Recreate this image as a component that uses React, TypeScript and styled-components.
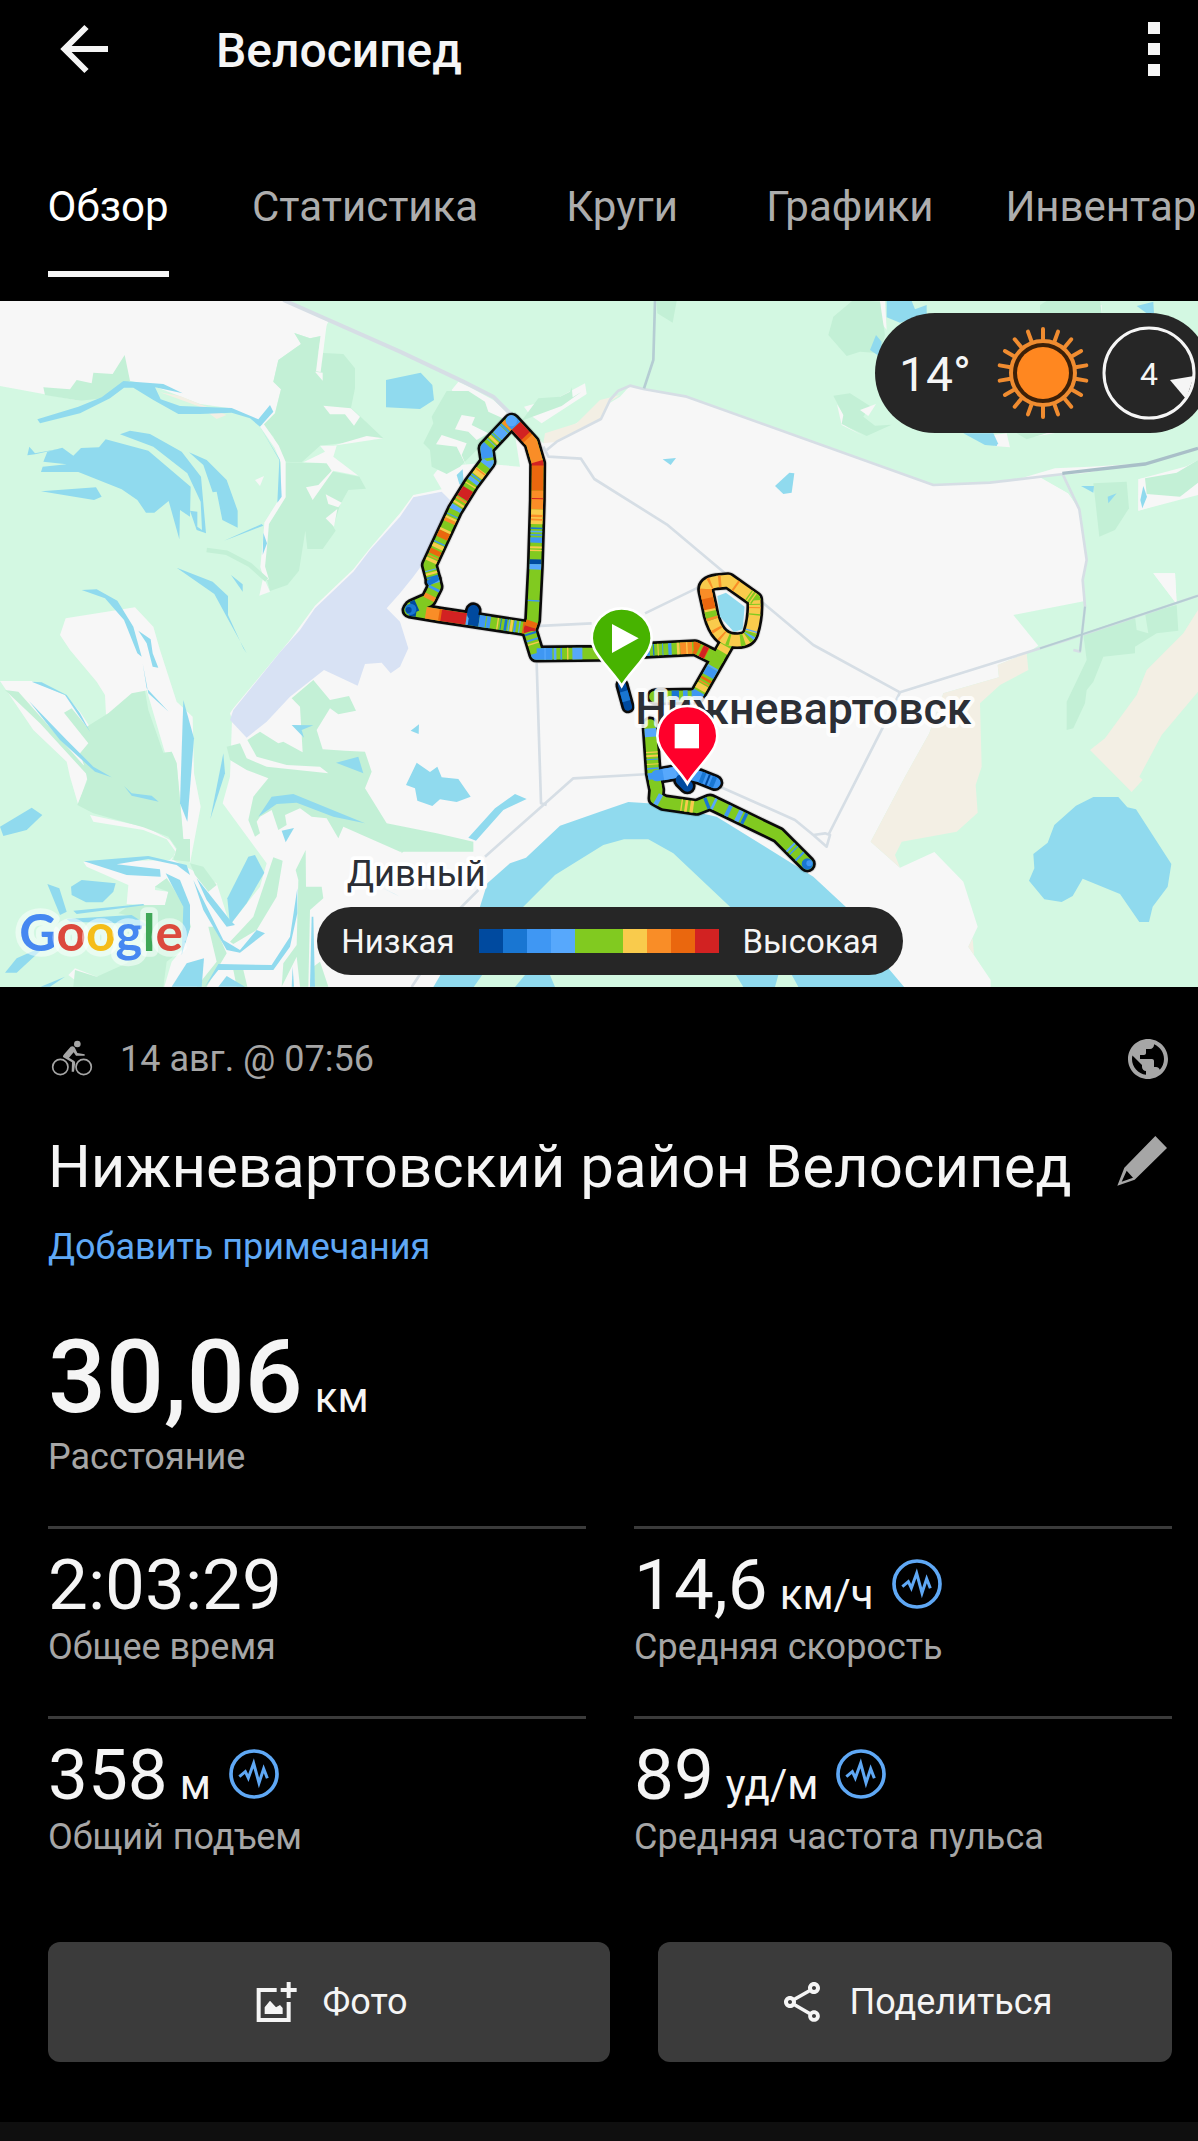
import React from "react";
import styled, { createGlobalStyle } from "styled-components";
import { MdOutlineShare, MdPublic } from "react-icons/md";

const color = {
  text: "#f5f5f5",
  muted: "#a6a6a6",
  link: "#5fa8f5",
  line: "#3b3b3b",
  pill: "#262626",
};

const GlobalStyle = createGlobalStyle`
  * { box-sizing: border-box; }
  body {
    margin: 0;
    background: #000;
    color: ${color.text};
    font-family: Roboto, "Noto Sans", sans-serif;
  }
  button {
    padding: 0;
    border: 0;
    background: none;
    color: inherit;
    font: inherit;
    cursor: pointer;
  }
  svg { display: block; flex: none; }
`;

const Page = styled.div`
  overflow: hidden;
`;

const Header = styled.header`
  display: flex;
  align-items: center;
  height: 98px;
  padding: 0 36px 0 60px;
`;

const Title = styled.h1`
  flex: 1;
  margin: 0 0 0 106px;
  padding-top: 4px;
  font-size: 48px;
  line-height: 56px;
  font-weight: 500;
`;

const Tabs = styled.nav`
  display: flex;
  padding: 85px 0 24px;
`;

const Tab = styled.button`
  && {
    flex: none;
    min-width: 216px;
    padding: 0 36px;
    font-size: 42px;
    line-height: 48px;
  }
`;

const TabLabel = styled.span<{ $active?: boolean }>`
  display: inline-block;
  padding-bottom: 40px;
  border-bottom: 6px solid ${(p) => (p.$active ? color.text : "transparent")};
  color: ${(p) => (p.$active ? "#fff" : "#adadad")};
  vertical-align: top;
`;

const MapArea = styled.section`
  position: relative;
  overflow: hidden;
`;

const MapSvg = styled.svg`
  width: 100%;
  height: auto;
`;

const Weather = styled.div`
  position: absolute;
  top: 12px;
  right: -12px;
  display: flex;
  align-items: center;
  height: 120px;
  padding: 0 14px 0 24px;
  border-radius: 60px;
  background: ${color.pill};
`;

const Temperature = styled.span`
  margin-right: 25px;
  padding-top: 4px;
  font-size: 48px;
  line-height: 56px;
`;

const Wind = styled.div`
  position: relative;
  display: grid;
  place-items: center;
  width: 94px;
  height: 94px;
  margin-left: 12px;
  padding-top: 2px;
  font-size: 32px;
  line-height: 40px;
`;

const WindDial = styled.svg`
  position: absolute;
  inset: 0;
`;

const LegendRow = styled.div`
  position: absolute;
  left: 48px;
  right: 26px;
  bottom: 12px;
  display: flex;
  justify-content: center;
`;

const Legend = styled.div`
  display: flex;
  align-items: center;
  gap: 24px;
  height: 68px;
  padding: 0 24px;
  border-radius: 34px;
  background: ${color.pill};
  font-size: 33px;
  line-height: 40px;
`;

const LegendText = styled.span`
  padding-top: 2px;
`;

const Scale = styled.div`
  display: flex;
`;

const Swatch = styled.span<{ $color: string; $wide?: boolean }>`
  width: ${(p) => (p.$wide ? 48 : 24)}px;
  height: 24px;
  background: ${(p) => p.$color};
`;

const Details = styled.main`
  padding: 48px 26px 60px 48px;
`;

const Meta = styled.div`
  display: flex;
  align-items: center;
  gap: 24px;
  color: ${color.muted};
  font-size: 36px;
  line-height: 48px;
`;

const DateText = styled.time`
  flex: 1;
`;

const NameRow = styled.div`
  display: flex;
  align-items: flex-start;
  justify-content: space-between;
  margin-top: 48px;
  color: ${color.muted};
`;

const Name = styled.h2`
  margin: 0;
  color: ${color.text};
  font-size: 60px;
  line-height: 72px;
  font-weight: 400;
`;

const NotesLink = styled.a`
  display: block;
  width: fit-content;
  margin-top: 24px;
  color: ${color.link};
  font-size: 36px;
  line-height: 40px;
  text-decoration: none;
`;

const Distance = styled.div`
  margin: 54px 0 49px;
`;

const Value = styled.div<{ $big?: boolean }>`
  display: flex;
  align-items: baseline;
  font-size: ${(p) => (p.$big ? 102 : 71)}px;
  line-height: ${(p) => (p.$big ? 112 : 84)}px;
  font-weight: ${(p) => (p.$big ? 500 : 400)};
  margin-bottom: ${(p) => (p.$big ? 4 : 0)}px;
`;

const Unit = styled.span`
  margin-left: 12px;
  font-size: 42px;
  line-height: 48px;
  font-weight: 400;
`;

const Label = styled.div`
  color: ${color.muted};
  font-size: 36px;
  line-height: 40px;
`;

const Stats = styled.section`
  display: grid;
  grid-template-columns: 1fr 1fr;
  column-gap: 48px;
`;

const Stat = styled.div`
  padding: 14px 0 49px;
  border-top: 3px solid ${color.line};
`;

const ChartButton = styled.button`
  && {
    margin-left: 18px;
    color: ${color.link};
    line-height: 0;
  }
  svg { display: inline; }
`;

const Actions = styled.div`
  display: grid;
  grid-template-columns: 562fr 514fr;
  gap: 48px;
  margin-top: 36px;
`;

const Action = styled.button`
  && {
    display: flex;
    align-items: center;
    justify-content: center;
    gap: 24px;
    height: 120px;
    border-radius: 12px;
    background: ${color.line};
    font-size: 36px;
    line-height: 44px;
  }
`;

const BottomBar = styled.footer`
  height: 19px;
  background: #0f0f0f;
`;

/* ---------- icons ---------- */

const BackIcon = () => (
  <svg width="50" height="50" viewBox="0 0 50 50" fill="none" stroke="currentColor" strokeWidth="6">
    <path d="M48 25H6M26.500 3L4.500 25l22 22" />
  </svg>
);

const MoreIcon = () => (
  <svg width="16" height="54" viewBox="0 0 16 54" fill="currentColor">
    <path d="M2 0h12v12H2zM2 21h12v12H2zM2 42h12v12H2z" />
  </svg>
);

const BikeIcon = () => (
  <svg width="48" height="48" viewBox="0 0 144 144" fill="currentColor">
    <g fill="none" stroke="currentColor" strokeWidth="5">
      <circle cx="37" cy="96" r="23" />
      <circle cx="107" cy="96" r="23" />
    </g>
    <circle cx="88" cy="27" r="10" />
    <path d="M68 35c6-4 12 0 14 6l6 13 22 4v4H84l-7-10-14 16 16 10c4 3 2 10 1 18l-2 14h-7l1-28-26-15c-3-3 0-6 3-10z" />
  </svg>
);

const PencilIcon = () => (
  <svg width="60" height="60" viewBox="0 0 180 180" fill="currentColor">
    <path d="M130 15l35 36-97 95-52 18 21-54zM44 119l-15 33 34-12z" fillRule="evenodd" />
  </svg>
);

const PulseIcon = () => (
  <svg width="50" height="50" viewBox="0 0 150 150" fill="none" stroke="currentColor">
    <circle cx="75" cy="75" r="69" strokeWidth="11" />
    <path d="M31 83l18-15 9 19 16-44 16 59 14-43 11 29" strokeWidth="9" />
  </svg>
);

const PhotoIcon = () => (
  <svg width="48" height="48" viewBox="-8 0 144 144" fill="currentColor">
    <path d="M12 30h60v12H24v78h78V72h12v60H12zM102 12h12v18h18v12h-18v18h-12V42H84V30h18zM36 108V88l16-20 18 20 12-7 8 9v18z" />
  </svg>
);

const SunIcon = () => (
  <svg width="94" height="94" viewBox="0 0 94 94">
    <g stroke="#f08c30" strokeWidth="4" strokeLinecap="round">
      {Array.from({ length: 18 }, (_, i) => (
        <path key={i} d="M47 14V3" transform={`rotate(${i * 20} 47 47)`} />
      ))}
    </g>
    <circle cx="47" cy="47" r="32" fill="#3d2008" stroke="#f08c30" strokeWidth="4" />
    <circle cx="47" cy="47" r="26" fill="#ff8720" />
  </svg>
);

/* ---------- map ---------- */

const heat = {
  navy: "#004a9f",
  blue: "#1976d2",
  azure: "#3f97f3",
  sky: "#57a8fc",
  green: "#81ca20",
  yellow: "#f9cb4c",
  orange: "#f98d27",
  ember: "#ea670e",
  red: "#d22222",
};

type Heat = keyof typeof heat;
type Band = [start: number, length: number, tone: Heat];

const legend: Heat[] = ["navy", "blue", "azure", "sky", "green", "yellow", "orange", "ember", "red"];

interface Leg {
  d: string;
  width?: number;
  base?: Heat;
  bands: Band[];
}

const legs: Leg[] = [
  {
    d: "M1230 930L1320 945 1420 960 1585 985",
    bands: [
      [0, 20, "navy"], [48, 47, "orange"], [88, 10, "ember"], [95, 76, "red"], [171, 8, "sky"], [178, 32, "navy"],
      [210, 34, "azure"], [229, 3, "green"], [264, 4, "yellow"], [274, 3, "blue"], [286, 8, "blue"], [298, 4, "sky"],
      [304, 8, "yellow"], [315, 7, "azure"], [330, 4, "sky"], [342, 17, "ember"],
    ],
  },
  {
    d: "M1236 922L1285 900 1305 860 1288 795 1365 630 1415 550 1464 485 1458 445 1532 366",
    bands: [
      [0, 16, "navy"], [56, 14, "orange"], [88, 8, "azure"], [108, 12, "sky"], [126, 5, "blue"], [136, 7, "yellow"],
      [148, 3, "sky"], [176, 10, "yellow"], [190, 4, "orange"], [200, 15, "ember"], [221, 12, "yellow"],
      [236, 4, "azure"], [254, 22, "ember"], [276, 7, "yellow"], [306, 10, "orange"], [316, 7, "yellow"],
      [328, 3, "azure"], [347, 14, "sky"], [366, 7, "yellow"], [380, 6, "orange"], [390, 32, "red"], [434, 4, "yellow"],
      [446, 12, "sky"], [462, 5, "azure"], [470, 20, "yellow"], [484, 4, "orange"], [510, 16, "sky"],
      [534, 40, "azure"], [586, 3, "sky"], [594, 8, "yellow"], [606, 5, "azure"], [614, 28, "sky"],
      [644, 6, "azure"], [652, 12, "orange"],
    ],
  },
  {
    d: "M1536 364L1595 428 1613 490 1612 600 1606 800 1598 960 1588 990 1610 1062 1800 1060 1950 1050 2085 1043 2140 1070",
    bands: [
      [0, 18, "azure"], [18, 48, "red"], [60, 18, "ember"], [70, 80, "orange"], [146, 18, "red"],
      [158, 76, "ember"], [234, 56, "orange"], [256, 3, "red"], [290, 44, "yellow"], [306, 7, "orange"],
      [318, 5, "orange"], [344, 5, "blue"], [354, 5, "sky"], [364, 5, "azure"], [374, 16, "azure"], [401, 6, "yellow"],
      [411, 4, "yellow"], [440, 14, "navy"], [454, 16, "sky"], [562, 4, "azure"], [626, 18, "ember"],
      [644, 14, "red"], [662, 6, "blue"], [682, 5, "azure"], [694, 4, "yellow"], [726, 50, "azure"],
      [752, 4, "sky"], [780, 8, "sky"], [800, 5, "azure"], [820, 4, "yellow"], [836, 30, "sky"],
      [1046, 5, "sky"], [1058, 10, "azure"], [1078, 4, "blue"], [1092, 3, "yellow"], [1106, 3, "azure"],
      [1124, 10, "azure"], [1150, 8, "yellow"], [1160, 36, "orange"], [1178, 4, "yellow"],
      [1200, 44, "ember"], [1216, 8, "green"], [1226, 16, "red"],
    ],
  },
  {
    d: "M1950 1275L1960 1420 1970 1470 1968 1495 1992 1508 2090 1522 2130 1506 2335 1605 2422 1692",
    bands: [
      [10, 26, "sky"], [80, 4, "yellow"], [90, 6, "yellow"], [102, 3, "azure"], [116, 3, "yellow"], [128, 5, "azure"],
      [144, 18, "azure"], [166, 22, "green"], [222, 14, "sky"], [300, 4, "yellow"], [312, 8, "yellow"],
      [328, 10, "yellow"], [376, 10, "blue"], [400, 8, "sky"], [446, 12, "azure"], [480, 14, "sky"],
      [500, 10, "blue"], [668, 6, "sky"], [682, 4, "azure"], [706, 6, "azure"],
    ],
  },
  {
    d: "M1965 1190L2090 1188 2185 1022",
    bands: [
      [6, 12, "sky"], [28, 6, "azure"], [50, 22, "blue"], [84, 14, "azure"], [110, 30, "azure"],
      [146, 18, "yellow"], [168, 4, "orange"], [178, 8, "ember"], [194, 26, "azure"], [220, 6, "sky"],
      [250, 10, "green"], [278, 20, "yellow"],
    ],
  },
  {
    d: "M2190 1020C2150 1010 2135 960 2128 920L2118 875Q2112 850 2150 845L2185 842 2264 898Q2268 950 2252 1000 2242 1028 2190 1020",
    base: "yellow",
    bands: [
      [0, 8, "green"], [24, 6, "orange"], [48, 8, "orange"], [84, 26, "green"], [84, 8, "orange"], [116, 60, "ember"],
      [150, 28, "orange"], [198, 6, "orange"], [226, 8, "orange"], [280, 6, "orange"], [330, 26, "green"],
      [334, 4, "yellow"], [344, 4, "yellow"], [366, 3, "green"], [376, 3, "orange"], [396, 4, "green"],
      [446, 4, "sky"], [452, 22, "green"], [460, 6, "sky"], [484, 12, "green"],
    ],
  },
  {
    d: "M1970 1427L2040 1415 2100 1430 2145 1448",
    width: 34,
    base: "azure",
    bands: [[20, 40, "sky"], [135, 12, "blue"], [155, 6, "navy"], [168, 20, "blue"]],
  },
  { d: "M2044 1440L2062 1458", width: 34, base: "navy", bands: [] },
  { d: "M1866 1155L1884 1220", width: 24, base: "navy", bands: [[20, 30, "blue"]] },
  { d: "M1418 942L1420 932", width: 34, base: "navy", bands: [] },
  { d: "M1290 846L1308 836", width: 18, base: "blue", bands: [] },
];

/* turning points, where the rider slowed down */
const turns: [x: number, y: number, r: number, tone: Heat][] = [
  [1232, 928, 17, "blue"],
  [1226, 930, 9, "navy"],
  [1534, 362, 17, "sky"],
  [2422, 1692, 17, "blue"],
  [2428, 1690, 9, "azure"],
];

const Track = () => (
  <g fill="none" strokeLinejoin="round" strokeLinecap="round">
    {legs.map((leg) => (
      <path key={leg.d} d={leg.d} stroke="#000" strokeOpacity=".1" strokeWidth={(leg.width ?? 35) + 22} />
    ))}
    {legs.map((leg) => (
      <path key={leg.d} d={leg.d} stroke="#0a0a0a" strokeWidth={(leg.width ?? 35) + 16} />
    ))}
    {legs.map((leg) => (
      <g key={leg.d} strokeWidth={leg.width ?? 35}>
        <path d={leg.d} stroke={heat[leg.base ?? "green"]} />
        {leg.bands.map(([start, length, tone], i) => (
          <path key={i} d={leg.d} stroke={heat[tone]} strokeLinecap="butt" strokeDasharray={`0 ${start} ${length} 9999`} />
        ))}
      </g>
    ))}
    {turns.map(([x, y, r, tone]) => (
      <circle key={`${x}-${y}`} cx={x} cy={y} r={r} fill={heat[tone]} />
    ))}
  </g>
);

const whites = [
  "0,0 850,0 985,65 963,108 930,115 883,99 903,132 835,180 820,245 843,268 825,340 790,375 770,362 690,325 600,312 470,262 390,242 240,302 0,258",
  "1535,345 1630,430 1860,290 1890,257 1930,268 2060,290 2400,412 2800,555 2970,548 3120,530 3205,580 3240,630 3260,780 3248,840 3255,903 3040,945 3115,1037 3080,1060 2993,1095 2997,1132 2830,1180 2788,1300 2715,1430 2612,1625 2700,1703 2803,1656 2890,1745 2933,1880 2905,1940 2972,2040 2972,2070 490,2070 515,1985 545,1950 572,1880 560,1810 500,1735 465,1760 465,1770 505,1775 495,1815 440,1815 380,1812 385,1755 260,1700 250,1685 520,1680 650,1750 690,1875 780,1760 800,1690 668,1510 690,1430 696,1260 690,1240 700,1225 870,1020 945,917 1060,808 1110,745 1200,640 1240,585 1325,568 1300,525 1320,500 1440,490 1560,500",
  "180,1005 197,955 405,922 460,980 480,1050 530,1205 578,1250 582,1420 602,1520 570,1690 550,1620 540,1500 530,1390 515,1355 495,1358 440,1170 318,1245 315,1185 290,1145 210,1050",
  "0,1143 95,1143 195,1185 240,1235 325,1365 260,1440 235,1515 210,1430 200,1385 100,1290",
  "270,1545 440,1582 510,1620 530,1650 510,1690 485,1705 530,1660 500,1618 430,1590 280,1565",
  "1355,270 1375,245 1410,262 1480,300 1530,345 1500,380 1440,420 1420,360",
  "1355,370 1305,450 1360,560 1330,500 1350,460",
  "1572,320 1680,290 1755,250 1760,282 1625,370 1590,345",
  "3045,540 3165,505 3270,500 3594,480 3594,580 3415,632 3415,538",
  "3460,820 3525,820 3530,912",
  "2511,313 2525,375 2590,408 2540,380 2532,345",
  "2640,3 2655,3 2660,90 2645,70",
  "3225,20 3305,15 3305,40 3225,40",
  "2980,405 3020,400 3030,442 2982,438",
  "3075,415 3140,400 3170,398",
  "205,2025 225,2005 290,2030 370,2010 380,1990 400,2000 360,2025 300,2050 250,2060",
];

/* suburbs east of the ring road stay green */
const easternGreens = ["3120,532 3187,524 3250,520 3594,462 3594,480 3530,515 3415,538 3412,636 3594,590 3594,815 3270,815 3240,630 3205,580"];

const midGreens = [
  "130,262 210,268 230,240 275,250 280,218 338,222 374,165 390,242 310,295 240,302 135,285",
  "883,99 930,115 963,108 945,215 955,158 1030,162 1065,205 1065,265 1053,323 1150,415 960,437 905,487 850,485 820,410 790,375 825,340 843,268 820,245 835,180 903,132",
  "850,487 980,490 1000,515 1078,530 1098,566 1045,570 1020,615 1000,680 1007,692 968,747 922,747 916,692 897,812 862,855 810,873 790,800 805,670 850,600 855,550",
  "1340,273 1405,273 1455,305 1465,335 1520,360 1450,430 1380,500 1340,522 1295,500 1290,450 1270,430 1300,370 1295,350",
  "1615,295 1680,290 1710,275 1715,262 1718,292 1745,275 1685,318 1565,362",
  "2560,0 2640,5 2655,105 2640,160 2580,155 2540,168 2485,105 2500,50",
  "3120,15 3140,3 3300,3 3305,40 3120,40",
  "2500,287 2550,280 2610,318 2590,350 2625,377 2675,374 2600,408 2525,372 2530,345",
  "3280,550 3380,545 3387,625 3345,690 3298,710",
  "3435,535 3530,518 3594,480 3594,548 3540,590 3440,582",
  "3250,1005 3405,950 3410,990 3445,1000 3435,940 3530,915 3535,992 3470,1000 3405,1040 3405,1060 3310,1070 3280,1145 3260,1170 3255,1210 3220,1285 3200,1290 3200,1205 3260,1080",
  "3050,400 3140,400 3080,418",
  "1970,3 2030,3 2018,68 1972,40",
  "15,1170 55,1175 250,1395 335,1430 265,1428 120,1270",
  "192,1238 215,1225 260,1280 325,1240 395,1180 435,1172 445,1230 490,1358 515,1355 530,1390 540,1500 550,1617 570,1617 570,1685 520,1680 530,1645 505,1610 430,1582 280,1540 232,1515 262,1440 255,1405 240,1360 265,1330",
  "680,1340 720,1330 740,1375 800,1400 985,1420 960,1400 860,1395 770,1370 742,1320 780,1295 835,1330 850,1325 908,1357 900,1220 875,1195 940,1140 990,1200 1047,1188 1068,1232 1015,1243 990,1225 950,1290 968,1348 1035,1352 1095,1355 1115,1415 1095,1465 1160,1570 1310,1600 1420,1625 1420,1655 1200,1655 1030,1580 1015,1615 980,1555 935,1550 900,1525 855,1545 860,1575 835,1590 815,1530 780,1550 770,1565 780,1600 765,1610 745,1560 760,1490 805,1435 740,1410 690,1380",
  "820,1672 848,1682 830,1790 770,1890 700,1932 690,1925 760,1850",
  "917,1650 918,1760 965,1760 970,1795 930,1830 925,2060 900,2060 890,1970 845,2060 850,1990 890,1935 895,1740 887,1710",
  "570,1690 610,1700 650,1755 625,1775 585,1725",
  "625,1880 645,1880 680,1960 620,2060 590,2060 650,1985",
  "465,1760 500,1735 560,1830 572,1880 545,1950 500,1985 490,2060 220,2060 225,2010 290,2030 380,1990 440,1930 400,1850 355,1840 390,1815 440,1815 495,1815 505,1775",
  "700,2010 730,2010 742,2060 710,2060",
  "940,2000 960,1985 985,2060 945,2060",
  "1200,1610 1220,1645 1205,1660",
];

const waters = [
  "112,358 235,320 305,292 370,243 490,252 548,280 465,262 482,298 540,318 695,324 775,358 810,315 820,335 780,380 750,355 695,338 600,342 535,342 460,300 400,263 372,263 330,295 240,340 120,370",
  "130,485 142,455 187,443 220,467 243,444 297,442 317,418 445,452 572,560 570,650 540,630 538,718 506,603 463,638 438,638 412,600 365,568 235,516 123,516 128,500 200,493",
  "82,466 88,440 105,460 187,445 105,463",
  "123,574 288,562 305,590 282,600",
  "360,403 390,392 450,402 545,455 603,530 618,700 590,690 570,632 592,635 592,680 606,690 602,605 562,520 460,440",
  "567,457 620,480 680,540 713,632 713,683 667,660 650,575 638,577 610,495",
  "780,380 840,480 845,590 832,608 838,480",
  "790,698 801,730 788,765",
  "672,722 785,672 790,677 700,712",
  "530,803 638,845 684,888 684,945 730,1045 740,1060 680,950 643,882",
  "693,825 728,853 728,875",
  "245,870 290,868 352,902 400,980 425,1070 412,1060 372,960 315,895",
  "415,992 452,1018 458,1060 475,1103 458,1100 440,1030",
  "428,1090 440,1165 506,1235 445,1180",
  "95,1145 125,1147 200,1185 240,1240 270,1295 235,1245 195,1185",
  "87,1203 200,1320 280,1400 335,1432 285,1415 180,1320",
  "372,1458 395,1480 455,1487 476,1505 395,1487",
  "550,1200 582,1315 562,1565 540,1510",
  "670,1360 675,1420 631,1557",
  "0,1580 95,1523 127,1545 80,1590 10,1608",
  "252,1684 445,1668 560,1695 570,1725 530,1695 445,1677 350,1693 480,1708 482,1730 380,1725",
  "497,1720 540,1740 570,1815 570,1885 545,1965 550,1820",
  "213,1760 245,1740 347,1750 340,1775 308,1807 258,1807 215,1785",
  "142,1752 178,1765 200,1835 180,1845",
  "220,1832 430,1812 433,1816 230,1842",
  "200,1857 395,1845 450,1880 360,1870 210,1865",
  "15,2018 50,1975 140,1935 50,2018",
  "122,2060 195,2030 150,2060",
  "515,2060 560,1990 612,1975 605,2060",
  "580,1740 670,1920 720,1950 770,1890 795,1900 720,1958 680,1950 610,1830",
  "590,1735 690,1860 705,1875 680,1880 620,1800",
  "682,1795 745,1670 765,1665 793,1718 740,1810 690,1875",
  "655,1992 815,1995 870,1910 892,1765 892,1840 870,1940 820,2010 655,2010 615,2060",
  "655,2060 680,2028 735,2060",
  "935,1850 930,2060 945,2060 940,1850",
  "875,2060 878,2000 882,2060",
  "775,1550 815,1490 880,1482 1095,1570 1000,1550 890,1508 830,1512",
  "875,1275 940,1276 905,1290 912,1313",
  "1008,1388 1075,1370 1090,1420",
  "845,1592 882,1584 857,1627",
  "1140,1760 1200,1790 1180,1780",
  "1158,240 1262,218 1297,255 1302,300 1260,327 1158,322",
  "1370,525 1388,508 1392,560 1378,552",
  "1988,478 2028,474 2012,495",
  "2325,558 2368,518 2383,520 2375,578 2350,582",
  "2660,3 2735,3 2745,28 2780,15 2780,42 2700,68 2660,52",
  "2610,150 2628,105 2645,125 2640,170",
  "2890,400 2980,400 2994,430 2990,438 2955,435",
  "3410,18 3460,5 3462,40 3440,40",
  "3243,558 3282,558 3280,578",
  "3323,590 3350,580 3325,610",
  "3430,558 3441,590 3427,625 3421,600",
  "3280,1491 3355,1491 3382,1522 3408,1528 3514,1692 3503,1760 3458,1820 3447,1866 3418,1866 3360,1782 3248,1736 3218,1788 3185,1806 3133,1798 3087,1742 3103,1705 3100,1662 3143,1628 3163,1575 3228,1517",
  "1232,1292 1257,1273 1256,1302",
  "1218,1455 1250,1388 1290,1416 1312,1400 1325,1432 1375,1437 1412,1490 1370,1506 1320,1498 1297,1518 1252,1502 1245,1465",
  "1405,1613 1485,1525 1545,1482 1580,1497 1510,1530 1428,1622",
  "1295,2070 1440,1820 1462,1750 1530,1690 1578,1673 1680,1577 1800,1535 1885,1506 1980,1512 2150,1550 2440,1730 2537,1820 2665,2005 2720,2070",
];

const cityWhites = [
  "945,215 968,218 968,242", "970,317 1053,325 1080,350 1062,377 1035,343 990,343",
  "960,437 1010,437 1000,470 1075,527 1000,512 938,600 918,562 955,555 995,512 980,490 910,487 975,455",
  "1000,437 1100,408 1150,415", "977,583 1025,608 1015,622 985,612", "977,655 1012,627 1002,680",
  "765,540 792,528 780,558", "790,830 810,875 778,887",
  "1365,388 1385,345 1425,352 1415,375 1465,400 1430,420 1405,395",
  "1308,433 1325,405 1400,430 1385,465 1400,500 1370,440",
  "2580,330 2628,312 2605,348",
];

const beiges = [
  "480,277 540,288 680,345 650,357 600,320",
  "1630,430 1635,400 1730,370 1800,300 1860,285 1830,305 1803,357 1670,425",
  "3080,1060 2993,1095 2997,1132 2830,1180 2788,1300 2715,1430 2612,1625 2700,1703 2685,1665 2705,1625 2870,1595 2933,1538 2927,1455 2945,1400 2940,1210 3000,1155 3085,1110",
  "3594,930 3550,1000 3440,1110 3410,1185 3315,1315 3270,1350 3395,1476 3428,1440 3418,1430 3485,1305 3594,1175",
  "2905,1940 2918,1915 2922,1965",
];

const Shapes = ({ fill, items }: { fill: string; items: string[] }) => (
  <g fill={fill}>
    {items.map((points) => (
      <polygon key={points} points={points} />
    ))}
  </g>
);

const Pin = ({ x, y, fill, children }: { x: number; y: number; fill: string; children: React.ReactNode }) => (
  <g transform={`translate(${x} ${y})`}>
    <path
      d="M0 143C-14 118-38 94-58 68-78 42-90 24-90 0A90 90 0 0 1 90 0C90 24 78 42 58 68 38 94 14 118 0 143Z"
      fill={fill}
      stroke="#fff"
      strokeWidth="8"
    />
    {children}
  </g>
);

const RouteMap = () => (
  <MapSvg viewBox="0 3 3594 2058" role="img" aria-label="Карта маршрута">
    <rect width="3594" height="2070" fill="#d3f8e2" />
    <Shapes fill="#f7f7f7" items={whites} />
    <Shapes fill="#d3f8e2" items={easternGreens} />
    <polygon fill="#f7f7f7" points="3415,538 3594,490 3594,585 3415,632" />
    <polygon fill="#f7f7f7" points="3460,820 3525,820 3530,912" />
    <Shapes fill="#f3efe4" items={beiges} />
    <Shapes fill="#c3f0d6" items={midGreens} />
    <Shapes fill="#f7f7f7" items={cityWhites} />
    <polygon
      fill="#d8e2f4"
      points="840,1057 900,990 945,925 1060,815 1110,750 1200,650 1240,592 1325,575 1350,600 1262,800 1240,830 1200,880 1160,925 1200,965 1225,1045 1200,1100 1172,1120 1145,1088 1095,1092 1073,1157 972,1110 870,1190 800,1265 740,1313 690,1260 700,1230"
    />
    <g fill="none">
      <path d="M785 375L830 440 850 487V590L800 670 795 730 788 800 800 840" stroke="#f7f7f7" strokeWidth="14" />
      <path d="M974 65L955 215" stroke="#f7f7f7" strokeWidth="14" />
      <path d="M620 750L680 758 750 795 800 840" stroke="#c3f0d6" strokeWidth="14" />
    </g>
    <Shapes fill="#90daee" items={waters} />
    <polygon
      fill="#d3f8e2"
      points="1415,2070 1450,2020 1570,1820 1665,1725 1810,1635 1872,1618 1945,1618 2020,1660 2190,1820 2340,1960 2400,2070"
    />
    <polygon fill="#90daee" points="1545,2061 1575,2025 1650,2025 1665,2061" />
    <polygon fill="#90daee" points="2208,2025 2335,2025 2325,2061 2230,2061" />

    <g fill="none" stroke="#d6dee5" strokeWidth="8" strokeLinejoin="round">
      <path d="M850 0L1200 155 1390 245 1480 290 1535 345" strokeWidth="12" />
      <path d="M1640 450L1670 425 1803 357 1830 300 1855 272 1890 257 1930 267 2060 290 2400 412 2800 555 2970 548 3190 522" />
      <path d="M1630 440L1645 470 1743 476 1783 537 2000 673 2175 820 2285 905 2440 1035 2700 1177" />
      <path d="M2700 1177L3200 1020 3594 887M2700 1177L2647 1285 2485 1605" />
      <path d="M3187 520L3238 628 3260 780 3248 840 3255 920 3240 1055 3220 1050" />
      <path d="M1575 980L1775 970M1935 940L2100 860M1610 1090L1623 1510 1640 1515M1380 1825L1435 1770M1455 1670L1630 1515 1720 1435 1950 1422M2160 1460L2385 1560 2440 1605 2480 1640 2490 1605 2475 1600 2440 1605M1235 2061L1262 2020" />
    </g>
    <g fill="none" stroke="#b5cdd3" strokeWidth="8">
      <path d="M1965 3L1960 180 1932 265" />
      <path d="M3187 520L3435 492 3594 445" stroke="#a9bfc8" strokeWidth="10" />
      <path d="M3120 1045L3594 887M3255 920L3240 1055" strokeWidth="6" />
    </g>

    <Track />
    <polygon fill="#90daee" points="2152,888 2178,878 2234,920 2228,988 2202,996 2160,950" />

    <g fill="#2c2f36" stroke="#fff" strokeLinejoin="round" paintOrder="stroke">
      <text x="1906" y="1273" fontSize="134" fontWeight="500" strokeWidth="24" strokeOpacity=".85">
        Нижневартовск
      </text>
      <text x="1040" y="1758" fontSize="109" strokeWidth="22">
        Дивный
      </text>
    </g>

    <Pin x={1865} y={1015} fill="#47b300">
      <path d="M-29-43V44L51 0Z" fill="#fff" />
    </Pin>
    <Pin x={2062} y={1308} fill="#ff002b">
      <rect x="-38" y="-36" width="73" height="73" fill="#fff" />
    </Pin>

    <text x="58" y="1954" fontFamily="Lato, Roboto, sans-serif" fontSize="154" fontWeight="700" stroke="#fff" strokeOpacity=".5" strokeWidth="34" strokeLinejoin="round" paintOrder="stroke">
      <tspan fill="#4688f1">G</tspan>
      <tspan fill="#dc4a3d">o</tspan>
      <tspan fill="#f5bd18">o</tspan>
      <tspan fill="#4688f1">g</tspan>
      <tspan fill="#3fa757">l</tspan>
      <tspan fill="#dc4a3d">e</tspan>
    </text>
  </MapSvg>
);

/* ---------- page ---------- */

interface StatItem {
  value: string;
  unit?: string;
  label: string;
}

const stats: StatItem[] = [
  { value: "2:03:29", label: "Общее время" },
  { value: "14,6", unit: "км/ч", label: "Средняя скорость" },
  { value: "358", unit: "м", label: "Общий подъем" },
  { value: "89", unit: "уд/м", label: "Средняя частота пульса" },
];

const tabs = ["Обзор", "Статистика", "Круги", "Графики", "Инвентарь"];

export default function App() {
  return (
    <Page>
      <GlobalStyle />
      <Header>
        <button aria-label="Назад">
          <BackIcon />
        </button>
        <Title>Велосипед</Title>
        <button aria-label="Ещё">
          <MoreIcon />
        </button>
      </Header>

      <Tabs>
        {tabs.map((tab, i) => (
          <Tab key={tab}>
            <TabLabel $active={i === 0}>{tab}</TabLabel>
          </Tab>
        ))}
      </Tabs>

      <MapArea>
        <RouteMap />
        <Weather>
          <Temperature>14°</Temperature>
          <SunIcon />
          <Wind>
            <WindDial width="94" height="94" viewBox="0 0 94 94">
              <circle cx="47" cy="47" r="45" fill="none" stroke={color.text} strokeWidth="3" />
              <path d="M68 54l24-4-8 23z" fill={color.text} />
            </WindDial>
            4
          </Wind>
        </Weather>
        <LegendRow>
          <Legend>
            <LegendText>Низкая</LegendText>
            <Scale>
              {legend.map((tone) => (
                <Swatch key={tone} $color={heat[tone]} $wide={tone === "green"} />
              ))}
            </Scale>
            <LegendText>Высокая</LegendText>
          </Legend>
        </LegendRow>
      </MapArea>

      <Details>
        <Meta>
          <BikeIcon />
          <DateText>14 авг. @ 07:56</DateText>
          <MdPublic size={48} />
        </Meta>
        <NameRow>
          <Name>Нижневартовский район Велосипед</Name>
          <button aria-label="Изменить название">
            <PencilIcon />
          </button>
        </NameRow>
        <NotesLink href="#notes">Добавить примечания</NotesLink>

        <Distance>
          <Value $big>
            30,06<Unit>км</Unit>
          </Value>
          <Label>Расстояние</Label>
        </Distance>

        <Stats>
          {stats.map(({ value, unit, label }) => (
            <Stat key={label}>
              <Value>
                {value}
                {unit && <Unit>{unit}</Unit>}
                {unit && (
                  <ChartButton aria-label={`График: ${label}`}>
                    <PulseIcon />
                  </ChartButton>
                )}
              </Value>
              <Label>{label}</Label>
            </Stat>
          ))}
        </Stats>

        <Actions>
          <Action>
            <PhotoIcon />
            Фото
          </Action>
          <Action>
            <MdOutlineShare size={48} />
            Поделиться
          </Action>
        </Actions>
      </Details>
      <BottomBar />
    </Page>
  );
}
